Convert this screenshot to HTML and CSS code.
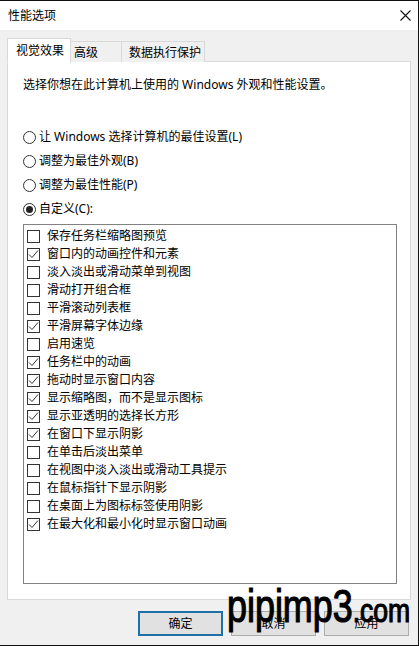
FILE: index.html
```html
<!DOCTYPE html>
<html lang="zh-CN">
<head>
<meta charset="utf-8">
<title>性能选项</title>
<link rel="stylesheet" href="styles.css">
</head>
<body>
<div class="window">
  <div class="titlebar">
    <span class="title">性能选项</span>
    <svg class="close" width="11" height="11" viewBox="0 0 11 11"><path d="M0.5 0.5 L10.5 10.5 M10.5 0.5 L0.5 10.5" stroke="#111" stroke-width="1.1" fill="none"/></svg>
  </div>
  <div class="content">
    <div class="tabs">
      <div class="tab tab-active">视觉效果</div>
      <div class="tab tab-2">高级</div>
      <div class="tab tab-3">数据执行保护</div>
    </div>
    <div class="panel">
      <p class="desc">选择你想在此计算机上使用的 Windows 外观和性能设置。</p>
      <div class="radios">
        <div class="radio-row"><span class="radio"></span><span>让 Windows 选择计算机的最佳设置(L)</span></div>
        <div class="radio-row"><span class="radio"></span><span>调整为最佳外观(B)</span></div>
        <div class="radio-row"><span class="radio"></span><span>调整为最佳性能(P)</span></div>
        <div class="radio-row"><span class="radio radio-on"></span><span>自定义(C):</span></div>
      </div>
      <div class="listbox">
        <div class="item"><span class="cb"></span><span>保存任务栏缩略图预览</span></div>
        <div class="item"><span class="cb on"><svg viewBox="0 0 13 13"><path d="M2 6.5 L5 9.5 L11 2.5"/></svg></span><span>窗口内的动画控件和元素</span></div>
        <div class="item"><span class="cb"></span><span>淡入淡出或滑动菜单到视图</span></div>
        <div class="item"><span class="cb"></span><span>滑动打开组合框</span></div>
        <div class="item"><span class="cb"></span><span>平滑滚动列表框</span></div>
        <div class="item"><span class="cb on"><svg viewBox="0 0 13 13"><path d="M2 6.5 L5 9.5 L11 2.5"/></svg></span><span>平滑屏幕字体边缘</span></div>
        <div class="item"><span class="cb"></span><span>启用速览</span></div>
        <div class="item"><span class="cb on"><svg viewBox="0 0 13 13"><path d="M2 6.5 L5 9.5 L11 2.5"/></svg></span><span>任务栏中的动画</span></div>
        <div class="item"><span class="cb on"><svg viewBox="0 0 13 13"><path d="M2 6.5 L5 9.5 L11 2.5"/></svg></span><span>拖动时显示窗口内容</span></div>
        <div class="item"><span class="cb on"><svg viewBox="0 0 13 13"><path d="M2 6.5 L5 9.5 L11 2.5"/></svg></span><span>显示缩略图，而不是显示图标</span></div>
        <div class="item"><span class="cb on"><svg viewBox="0 0 13 13"><path d="M2 6.5 L5 9.5 L11 2.5"/></svg></span><span>显示亚透明的选择长方形</span></div>
        <div class="item"><span class="cb on"><svg viewBox="0 0 13 13"><path d="M2 6.5 L5 9.5 L11 2.5"/></svg></span><span>在窗口下显示阴影</span></div>
        <div class="item"><span class="cb"></span><span>在单击后淡出菜单</span></div>
        <div class="item"><span class="cb"></span><span>在视图中淡入淡出或滑动工具提示</span></div>
        <div class="item"><span class="cb"></span><span>在鼠标指针下显示阴影</span></div>
        <div class="item"><span class="cb"></span><span>在桌面上为图标标签使用阴影</span></div>
        <div class="item"><span class="cb on"><svg viewBox="0 0 13 13"><path d="M2 6.5 L5 9.5 L11 2.5"/></svg></span><span>在最大化和最小化时显示窗口动画</span></div>
      </div>
    </div>
    <div class="buttons">
      <div class="btn btn-default">确定</div>
      <div class="btn">取消</div>
      <div class="btn">应用</div>
    </div>
  </div>
  <div class="watermark"><span class="wm-big">pipimp3</span><span class="wm-small">.com</span></div>
</div>
</body>
</html>
```
FILE: styles.css
```css
* { box-sizing: border-box; }
html, body { margin: 0; padding: 0; }
body {
  width: 419px;
  height: 646px;
  overflow: hidden;
  font-family: "Noto Sans", "Noto Sans CJK SC", sans-serif;
  font-size: 12px;
  color: #000;
  background: #f0f0f0;
}
.window {
  position: relative;
  width: 419px;
  height: 646px;
  border-top: 1px solid #111;
  border-right: 1px solid #111;
  border-bottom: 1px solid #111;
  background: #f0f0f0;
  display: flex;
  flex-direction: column;
}
.titlebar {
  height: 29px;
  background: #fff;
  display: flex;
  align-items: center;
  justify-content: space-between;
  padding: 0 7px 0 8px;
  flex: none;
}
.title { line-height: 16px; }
.close { display: block; }
.content {
  padding: 8px 7px 0 7px;
  flex: 1;
  display: flex;
  flex-direction: column;
}
.tabs {
  display: flex;
  align-items: flex-end;
  height: 24px;
  position: relative;
  z-index: 1;
}
.tab {
  height: 21px;
  border: 1px solid #d9d9d9;
  border-bottom: none;
  background: #f0f0f0;
  line-height: 18px;
  padding-top: 2px;
  white-space: nowrap;
}
.tab-active {
  width: 64px;
  background: #fff;
  padding: 4px 0 0 8px;
  line-height: 16px;
  border-bottom: 1px solid #fff;
  margin-bottom: -1px;
  height: 25px;
}
.tab-2 { width: 51px; padding-left: 3px; border-left: none; }
.tab-3 { width: 83px; padding-left: 7px; border-left: none; }
.panel {
  height: 539px;
  margin-top: -1px;
  background: #fff;
  border: 1px solid #d9d9d9;
  padding: 15px 0 0 15px;
  flex: none;
}
.desc {
  margin: 0;
  line-height: 16px;
}
.radios {
  margin-top: 36px;
  display: flex;
  flex-direction: column;
  gap: 8px;
}
.radio-row {
  display: flex;
  align-items: center;
  height: 16px;
  line-height: 16px;
}
.radio {
  width: 13px;
  height: 13px;
  border: 1px solid #333;
  border-radius: 50%;
  margin-right: 3px;
  flex: none;
  display: flex;
  align-items: center;
  justify-content: center;
}
.radio-on::after {
  content: "";
  width: 7px;
  height: 7px;
  border-radius: 50%;
  background: #222;
}
.listbox {
  margin-top: 7px;
  width: 374px;
  height: 360px;
  border: 1px solid #828282;
  padding: 2px 0 0 3px;
}
.item {
  height: 18px;
  display: flex;
  align-items: center;
  line-height: 16px;
}
.cb {
  width: 13px;
  height: 13px;
  border: 1px solid #333;
  background: #fff;
  margin-right: 7px;
  flex: none;
  display: block;
  position: relative;
}
.cb svg {
  position: absolute;
  left: -1px;
  top: -1px;
  width: 13px;
  height: 13px;
}
.cb svg path {
  fill: none;
  stroke: #333;
  stroke-width: 1;
}
.buttons {
  margin-top: 11px;
  display: flex;
  justify-content: flex-end;
  gap: 8px;
  padding-right: 2px;
}
.btn {
  width: 85px;
  height: 25px;
  background: #e1e1e1;
  border: 1px solid #adadad;
  display: flex;
  align-items: center;
  justify-content: center;
  line-height: 16px;
}
.btn-default {
  border: 2px solid #1f6fa8;
}
.watermark {
  position: absolute;
  left: 227px;
  top: 582px;
  font-family: "Liberation Sans", Arial, sans-serif;
  color: #000;
  white-space: nowrap;
  transform: scaleX(0.78);
  transform-origin: left top;
  line-height: 1;
  -webkit-text-stroke: 1.2px #000;
}
.wm-big { font-size: 46px; }
.wm-small { font-size: 34px; }
```
